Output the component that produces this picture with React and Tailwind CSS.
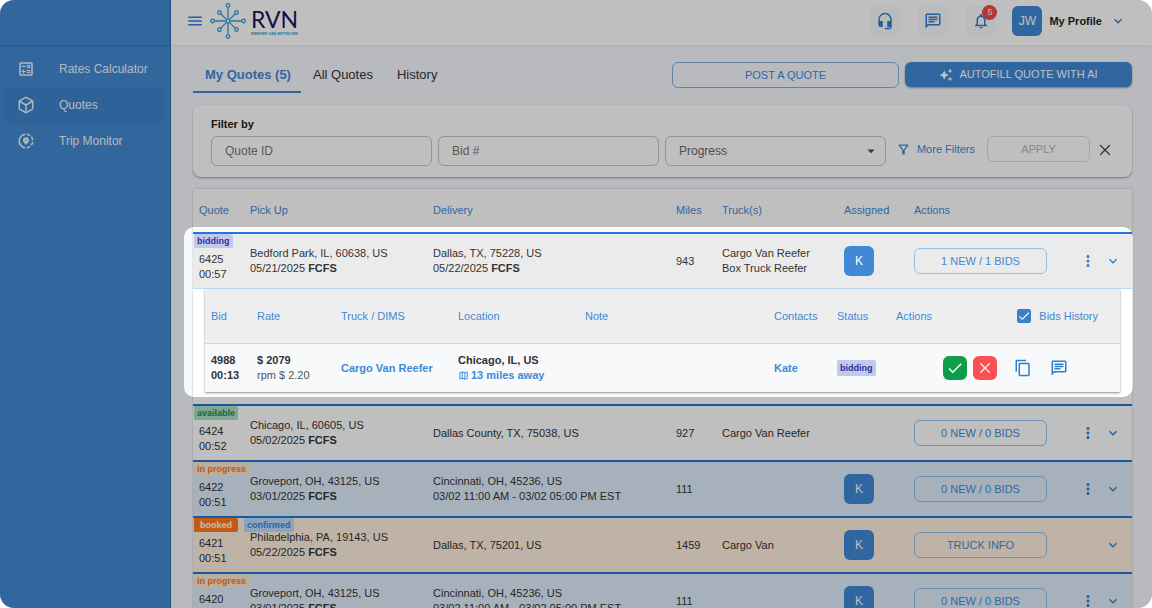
import React from "react";
import { Box, X } from "lucide-react";
import {
  MdArrowDropDown,
  MdAutoAwesome,
  MdCheck,
  MdContentCopy,
  MdExpandMore,
  MdHeadsetMic,
  MdMenu,
  MdMoreVert,
  MdNotificationsNone,
  MdOutlineCalculate,
  MdOutlineChat,
  MdOutlineFilterAlt,
  MdOutlineMap,
  MdShareLocation,
} from "react-icons/md";

const NAV = [
  { label: "Rates Calculator", Icon: MdOutlineCalculate },
  { label: "Quotes", Icon: Box, active: true },
  { label: "Trip Monitor", Icon: MdShareLocation },
];

const TAGS = {
  bidding: "bg-[#c2caeb] text-[#2f2f9f] px-[3px]",
  available: "bg-[#aedfc0] text-[#14924f] px-[3px]",
  "in progress": "bg-[#ffe7d0] text-[#f5791f] px-[3px]",
  booked: "bg-[#ff7a1a] text-white px-1.5",
  confirmed: "bg-[#bcdcfb] text-[#3a86d8] px-[3px]",
};

const QUOTES = [
  {
    id: "6425",
    time: "00:57",
    tags: ["bidding"],
    row: "bg-[#ebebeb]",
    pickup: ["Bedford Park, IL, 60638, US", "05/21/2025", "FCFS"],
    delivery: ["Dallas, TX, 75228, US", "05/22/2025", "FCFS"],
    miles: "943",
    trucks: ["Cargo Van Reefer", "Box Truck Reefer"],
    assigned: "K",
    action: "1 NEW / 1 BIDS",
    menu: true,
    open: true,
  },
  {
    id: "6424",
    time: "00:52",
    tags: ["available"],
    row: "bg-white",
    pickup: ["Chicago, IL, 60605, US", "05/02/2025", "FCFS"],
    delivery: ["Dallas County, TX, 75038, US"],
    miles: "927",
    trucks: ["Cargo Van Reefer"],
    action: "0 NEW / 0 BIDS",
    menu: true,
  },
  {
    id: "6422",
    time: "00:51",
    tags: ["in progress"],
    row: "bg-[#dfedfb]",
    pickup: ["Groveport, OH, 43125, US", "03/01/2025", "FCFS"],
    delivery: ["Cincinnati, OH, 45236, US", "03/02 11:00 AM - 03/02 05:00 PM EST"],
    miles: "111",
    trucks: [],
    assigned: "K",
    action: "0 NEW / 0 BIDS",
    menu: true,
  },
  {
    id: "6421",
    time: "00:51",
    tags: ["booked", "confirmed"],
    row: "bg-[#ffefdf]",
    pickup: ["Philadelphia, PA, 19143, US", "05/22/2025", "FCFS"],
    delivery: ["Dallas, TX, 75201, US"],
    miles: "1459",
    trucks: ["Cargo Van"],
    assigned: "K",
    action: "TRUCK INFO",
  },
  {
    id: "6420",
    time: "00:51",
    tags: ["in progress"],
    row: "bg-[#dfedfb]",
    pickup: ["Groveport, OH, 43125, US", "03/01/2025", "FCFS"],
    delivery: ["Cincinnati, OH, 45236, US", "03/02 11:00 AM - 03/02 05:00 PM EST"],
    miles: "111",
    trucks: [],
    assigned: "K",
    action: "0 NEW / 0 BIDS",
    menu: true,
  },
];

function Logo() {
  const spokes = [0, 45, 90, 135, 180, 225, 270, 315];
  return (
    <a href="#home" aria-label="RVN Reefer Van Network" className="flex items-center gap-[3px]">
      <svg viewBox="-20 -20 40 40" className="size-10" fill="none" stroke="#3a9fd0" strokeWidth="1.3">
        <circle r="1.9" />
        {spokes.map((deg) => {
          const r = deg % 90 === 0 ? 15.5 : 12;
          return (
            <g key={deg} transform={`rotate(${deg})`}>
              <path d={`M2 0H${r - 2}`} />
              <circle cx={r} cy="0" r="1.8" />
            </g>
          );
        })}
      </svg>
      <span className="flex flex-col">
        <span className="font-['Lato'] text-[23px] leading-6 text-[#1d1060]">RVN</span>
        <span className="text-[4px] font-bold leading-[5px] text-[#3a9fd0] whitespace-nowrap">
          REEFER VAN NETWORK
        </span>
      </span>
    </a>
  );
}

function Sidebar() {
  return (
    <aside className="w-[171px] shrink-0 border-r border-[#2a6db5] bg-[#438ad2]">
      <div className="h-[46px] border-b border-[#3579bd]" />
      <nav className="flex flex-col px-[5px] pt-[5px]">
        {NAV.map(({ label, Icon, active }) => (
          <a
            key={label}
            href="#nav"
            className={`flex h-9 items-center rounded-md pl-3 text-[12px] text-[#eef5fc] ${
              active ? "bg-[#3d84cb]" : ""
            }`}
          >
            <Icon className="size-[18px]" />
            <span className="pl-6">{label}</span>
          </a>
        ))}
      </nav>
    </aside>
  );
}

function IconTile({ label, badge, children }) {
  return (
    <button aria-label={label} className="relative grid size-[30px] place-items-center rounded-md bg-[#f8fafc] text-[#2f7fd0]">
      {children}
      {badge && (
        <span className="absolute -right-px -top-px grid size-[15px] place-items-center rounded-full bg-[#f04a4a] text-[9px] text-white">
          {badge}
        </span>
      )}
    </button>
  );
}

function Header() {
  return (
    <header className="flex h-[45px] shrink-0 items-center bg-white pb-[3px] pl-[15px] pr-[26px] shadow-[0_1px_6px_rgba(0,0,0,0.08)]">
      <button aria-label="Menu" className="text-[#2f7fd0]">
        <MdMenu className="size-[18px]" />
      </button>
      <div className="pl-1">
        <Logo />
      </div>
      <div className="ml-auto flex items-center gap-[18px]">
        <IconTile label="Support">
          <MdHeadsetMic className="size-[18px]" />
        </IconTile>
        <IconTile label="Messages">
          <MdOutlineChat className="size-[18px]" />
        </IconTile>
        <IconTile label="Notifications" badge="5">
          <MdNotificationsNone className="size-[18px]" />
        </IconTile>
        <button className="-ml-0.5 flex items-center text-[11px] font-bold text-[#222]">
          <span className="mr-[7px] grid size-[30px] place-items-center rounded-md bg-[#4189d4] text-[12px] font-normal text-white">
            JW
          </span>
          My Profile
          <MdExpandMore className="ml-2 size-4 text-[#2f7fd0]" />
        </button>
      </div>
    </header>
  );
}

function Toolbar() {
  return (
    <div className="flex items-start justify-between">
      <div role="tablist" className="flex h-[31px] text-[13px] text-[#333]">
        <button role="tab" aria-selected="true" className="border-b-2 border-[#3f89d6] pb-1 pl-3 pr-2.5 font-bold text-[#3f89d6]">
          My Quotes (5)
        </button>
        <button role="tab" aria-selected="false" className="px-3 pb-1.5">
          All Quotes
        </button>
        <button role="tab" aria-selected="false" className="px-3 pb-1.5">
          History
        </button>
      </div>
      <div className="flex gap-1.5 text-[11px]">
        <button className="h-[26px] w-[227px] rounded-md border border-[#7fb2e6] text-[#3f89d6]">POST A QUOTE</button>
        <button className="flex h-[25px] w-[227px] items-center justify-center gap-1.5 rounded-md bg-[#4189d4] text-white shadow-[0_1px_2px_rgba(0,0,0,0.4)]">
          <MdAutoAwesome className="size-3.5" />
          AUTOFILL QUOTE WITH AI
        </button>
      </div>
    </div>
  );
}

function Filters() {
  const field = "h-[30px] w-full rounded-md border border-[#c4c4c4] bg-transparent px-[13px] text-[12px] text-[#666]";
  return (
    <section className="mt-3 rounded-lg bg-white px-[18px] pb-[11px] pt-3 text-[11px] shadow-[0_1px_2px_rgba(0,0,0,0.4)]">
      <h2 className="pb-1 font-bold leading-[15px] text-[#222]">Filter by</h2>
      <div className="flex items-start">
        <div className="grid flex-1 grid-cols-3 gap-1.5">
          <input aria-label="Quote ID" placeholder="Quote ID" className={`${field} placeholder:text-[#777]`} />
          <input aria-label="Bid number" placeholder="Bid #" className={`${field} placeholder:text-[#777]`} />
          <div className="relative">
            <select aria-label="Progress" className={`${field} appearance-none`}>
              <option>Progress</option>
            </select>
            <MdArrowDropDown className="pointer-events-none absolute right-1.5 top-1.5 size-[18px] text-[#555]" />
          </div>
        </div>
        <button className="ml-2.5 flex h-[26px] items-center gap-1.5 text-[#3f89d6]">
          <MdOutlineFilterAlt className="size-[15px]" />
          More Filters
        </button>
        <button disabled className="ml-3 h-[26px] w-[103px] rounded-md border border-[#dcdcdc] text-[#b5b5b5]">
          APPLY
        </button>
        <button aria-label="Clear filters" className="ml-1.5 grid h-7 place-items-center text-[#444]">
          <X className="size-[18px]" strokeWidth={1.6} />
        </button>
      </div>
    </section>
  );
}

function Stop({ lines: [place, date, kind] }) {
  return (
    <>
      <div>{place}</div>
      {date && (
        <div>
          {date} {kind && <b>{kind}</b>}
        </div>
      )}
    </>
  );
}

function BidsTable() {
  return (
    <div className="mx-3 mb-3 bg-[#f7f9fb] shadow-[0_1px_2px_rgba(0,0,0,0.45)]">
      <table className="w-full table-fixed border-separate border-spacing-0 text-left">
        <colgroup>
          <col className="w-[46px]" />
          <col className="w-[84px]" />
          <col className="w-[117px]" />
          <col className="w-[127px]" />
          <col />
          <col className="w-[63px]" />
          <col className="w-[59px]" />
          <col className="w-[230px]" />
        </colgroup>
        <thead>
          <tr className="h-[55px] bg-[#eeeeee] text-[#3f89d6] [&>th]:border-b [&>th]:border-[#bcdaf5] [&>th]:pl-1.5 [&>th]:font-normal">
            <th>Bid</th>
            <th>Rate</th>
            <th>Truck / DIMS</th>
            <th>Location</th>
            <th>Note</th>
            <th>Contacts</th>
            <th>Status</th>
            <th>
              <div className="flex items-center justify-between pr-[22px]">
                Actions
                <label className="flex items-center gap-2">
                  <span className="relative grid size-3.5 place-items-center">
                    <input type="checkbox" defaultChecked className="peer size-3.5 appearance-none rounded-xs border border-[#3a80c8] checked:bg-[#3a80c8]" />
                    <MdCheck className="pointer-events-none invisible absolute size-3.5 text-white peer-checked:visible" />
                  </span>
                  Bids History
                </label>
              </div>
            </th>
          </tr>
        </thead>
        <tbody>
          <tr className="h-12 font-bold text-[#333] [&>td]:pl-1.5">
            <td>
              4988
              <br />
              00:13
            </td>
            <td>
              $ 2079
              <div className="font-normal text-[#555]">rpm $ 2.20</div>
            </td>
            <td>
              <a href="#truck" className="text-[#3f89d6]">Cargo Van Reefer</a>
            </td>
            <td>
              Chicago, IL, US
              <a href="#map" className="flex items-center gap-0.5 text-[#3f89d6]">
                <MdOutlineMap className="size-[11px]" />
                13 miles away
              </a>
            </td>
            <td />
            <td>
              <a href="#contact" className="text-[#3f89d6]">Kate</a>
            </td>
            <td>
              <span className={`inline-block rounded-xs text-[9px] leading-4 ${TAGS.bidding}`}>bidding</span>
            </td>
            <td>
              <div className="flex items-center pl-[47px] text-[#2f7fd0]">
                <button aria-label="Accept bid" className="grid size-6 place-items-center rounded-md bg-[#0f9d4a] text-white">
                  <MdCheck className="size-[18px]" />
                </button>
                <button aria-label="Reject bid" className="ml-1.5 grid size-6 place-items-center rounded-md bg-[#fb4f52] text-white">
                  <X className="size-[18px]" strokeWidth={1.5} />
                </button>
                <button aria-label="Copy bid" className="ml-[17px]">
                  <MdContentCopy className="size-[18px]" />
                </button>
                <button aria-label="Message" className="ml-[18px]">
                  <MdOutlineChat className="size-[18px]" />
                </button>
              </div>
            </td>
          </tr>
        </tbody>
      </table>
    </div>
  );
}

function QuoteRow({ quote }) {
  return (
    <tbody>
      <tr className={`h-14 ${quote.row} [&>td]:border-t-2 [&>td]:border-[#2277d8]`}>
        <td className="align-top">
          <div className="flex gap-1.5 whitespace-nowrap pl-px">
            {quote.tags.map((tag) => (
              <span key={tag} className={`rounded-r-xs text-[9px] font-bold leading-[14px] ${TAGS[tag]}`}>
                {tag}
              </span>
            ))}
          </div>
          <div className="pl-1.5 pt-1">
            {quote.id}
            <br />
            {quote.time}
          </div>
        </td>
        <td className="pl-1.5">
          <Stop lines={quote.pickup} />
        </td>
        <td className="pl-1.5">
          <Stop lines={quote.delivery} />
        </td>
        <td className="pl-1.5">{quote.miles}</td>
        <td className="pl-1.5">
          {quote.trucks.map((truck) => (
            <div key={truck}>{truck}</div>
          ))}
        </td>
        <td className="pl-1.5">
          {quote.assigned && (
            <span className="grid size-[30px] place-items-center rounded-md bg-[#4189d4] text-[12px] text-white">
              {quote.assigned}
            </span>
          )}
        </td>
        <td className="pl-1.5 pr-[11px]">
          <div className="flex items-center text-[#2f7fd0]">
            <button className="h-[26px] w-[133px] rounded-md border border-[#94c0ec] text-[#3f89d6]">{quote.action}</button>
            <div className="ml-auto flex items-center gap-2">
              {quote.menu && (
                <button aria-label="More actions">
                  <MdMoreVert className="size-[18px]" />
                </button>
              )}
              <button aria-label="Show bids">
                <MdExpandMore className="size-4" />
              </button>
            </div>
          </div>
        </td>
      </tr>
      {quote.open && (
        <tr>
          <td colSpan={7} className="relative border-t border-[#bcdaf5]">
            <BidsTable />
            {/* Tour spotlight: dims everything outside the open quote */}
            <div className="pointer-events-none absolute -left-[9px] -right-px -top-[62px] bottom-[7px] z-50 rounded-[10px] shadow-[0_0_0_2000px_rgba(0,0,0,0.25)]" />
          </td>
        </tr>
      )}
    </tbody>
  );
}

function QuotesTable() {
  return (
    <section className="mt-3 bg-white shadow-[0_0_2px_rgba(0,0,0,0.25)]">
      <table className="w-full table-fixed border-separate border-spacing-0 text-left text-[11px] leading-[15px] text-[#333]">
        <colgroup>
          <col className="w-[51px]" />
          <col className="w-[183px]" />
          <col />
          <col className="w-[46px]" />
          <col className="w-[122px]" />
          <col className="w-[70px]" />
          <col className="w-56" />
        </colgroup>
        <thead>
          <tr className="h-[43px] text-[#3f89d6] [&>th]:pl-1.5 [&>th]:font-normal">
            <th>Quote</th>
            <th>Pick Up</th>
            <th>Delivery</th>
            <th>Miles</th>
            <th>Truck(s)</th>
            <th>Assigned</th>
            <th>Actions</th>
          </tr>
        </thead>
        {QUOTES.map((quote) => (
          <QuoteRow key={quote.id} quote={quote} />
        ))}
      </table>
    </section>
  );
}

export default function App() {
  return (
    <div className="flex h-screen overflow-hidden rounded-[14px] bg-[#f6f9fc] font-['Liberation_Sans',sans-serif]">
      <Sidebar />
      <div className="flex min-w-0 flex-1 flex-col">
        <Header />
        <main className="min-h-0 flex-1 px-5 pl-[22px] pt-[17px]">
          <Toolbar />
          <Filters />
          <QuotesTable />
        </main>
      </div>
    </div>
  );
}
